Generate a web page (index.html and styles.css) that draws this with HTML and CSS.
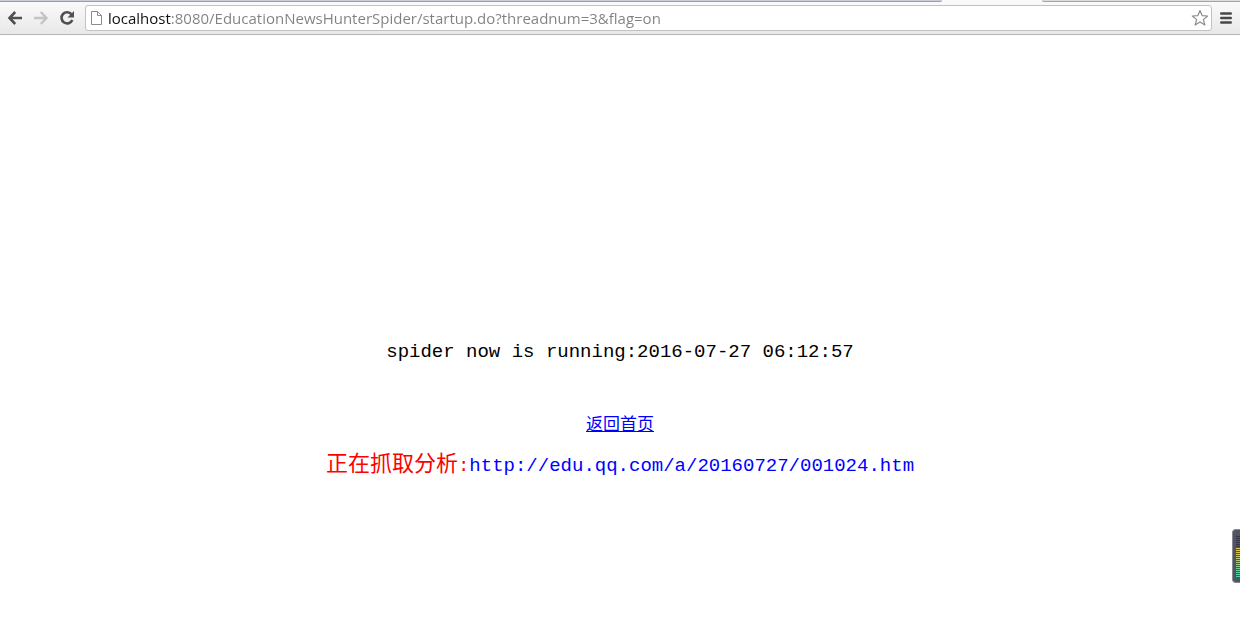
FILE: index.html
```html
<!DOCTYPE html>
<html lang="zh-CN">
<head>
<meta charset="utf-8">
<title>spider</title>
<link rel="stylesheet" href="styles.css">
</head>
<body>
<header class="browser">
  <div class="tabs"><span class="tabs-left"></span><span class="tab-active"></span><span class="tabs-right"></span></div>
  <div class="toolbar">
    <button class="tool" aria-label="Back"><svg width="16" height="16" viewBox="0 0 16 16" fill="none" stroke="#505052" stroke-width="2.6"><path d="M8.2 2 2.5 8l5.7 6M2.5 8H15"/></svg></button>
    <button class="tool" aria-label="Forward" disabled><svg width="16" height="16" viewBox="0 0 16 16" fill="none" stroke="#c4c4c4" stroke-width="2.4"><path d="m7.8 2 5.7 6-5.7 6M13.5 8H1"/></svg></button>
    <button class="tool" aria-label="Reload"><svg width="16" height="16" viewBox="0 0 16 16"><path d="M12.6 4.4A5.6 5.6 0 1 0 13.3 10" fill="none" stroke="#505052" stroke-width="2.6"/><path d="M15 1v6.5H8.5z" fill="#505052"/></svg></button>
    <div class="address">
      <svg class="page-icon" width="12" height="14" viewBox="0 0 12 14" fill="#fff" stroke="#8c8c8c"><path d="M.5.5h6l4 4v9H.5zM6.5.5v4h4"/></svg>
      <input class="url" type="text" aria-label="Address" value="localhost:8080/EducationNewsHunterSpider/startup.do?threadnum=3&amp;flag=on">
      <button class="star" aria-label="Bookmark"><svg width="18" height="18" viewBox="0 0 18 18" fill="#fff" stroke="#8c8c8c" stroke-width="1.2" stroke-linejoin="round"><path d="m9 1.5 2.1 5.1 5.6.4-4.3 3.6 1.4 5.5L9 13.1l-4.8 3 1.4-5.5L1.3 7l5.6-.4z"/></svg></button>
    </div>
    <button class="menu" aria-label="Menu"><svg width="12" height="12" viewBox="0 0 12 12" stroke="#48484a" stroke-width="2.6" stroke-linecap="round"><path d="M1.3 1.5h9.4M1.3 6h9.4M1.3 10.5h9.4"/></svg></button>
  </div>
</header>
<main class="content">
  <p class="status">spider now is running:2016-07-27 06:12:57</p>
  <a class="home" href="#">返回首页</a>
  <p class="crawl"><span class="label">正在抓取分析</span><span class="colon">:</span><span class="target">http://edu.qq.com/a/20160727/001024.htm</span></p>
</main>
<div class="meter"><div class="meter-bars"></div></div>
</body>
</html>
```
FILE: styles.css
```css
* { box-sizing: border-box; }
body {
  margin: 0;
  min-height: 100vh;
  background: #fff;
  font-family: "Liberation Mono", "Noto Sans CJK SC", monospace;
}
button { padding: 0; border: 0; background: none; display: flex; align-items: center; justify-content: center; }
.tabs { display: flex; height: 2px; background: #fafafa; }
.tabs-left { width: 76%; background: #c9ced6; border-bottom: 1px solid #9a9ea4; border-bottom-right-radius: 2px; }
.tab-active { width: 8%; }
.tabs-right { flex: 1; background: #dcdcdc; border-bottom: 1px solid #a4a4a4; border-bottom-left-radius: 2px; }
.toolbar {
  display: flex;
  align-items: center;
  height: 33px;
  padding: 0 4px 0 2px;
  background: linear-gradient(#fafafa, #e8e8e8);
  border-bottom: 1px solid #b4b4b4;
}
.tool { width: 26px; height: 24px; }
.address {
  flex: 1;
  display: flex;
  align-items: center;
  height: 26px;
  margin-left: 5px;
  padding: 0 2px 0 5px;
  background: #fff;
  border: 1px solid #c2c2c2;
  border-radius: 3px;
}
.url {
  flex: 1;
  min-width: 0;
  height: 22px;
  margin-left: 5px;
  padding: 0;
  border: 0;
  outline: 0;
  font: 15px "Open Sans", sans-serif;
  color: transparent;
  background: linear-gradient(to right, #111 63px, #808080 63px);
  -webkit-background-clip: text;
  background-clip: text;
}
.menu { width: 20px; height: 24px; margin-left: 4px; }
.content {
  display: flex;
  flex-direction: column;
  align-items: center;
  padding-top: 304px;
}
.status { margin: 0; font-size: 19px; line-height: 26px; color: #000; }
.home { margin-top: 48px; font-size: 17px; line-height: 26px; color: #00f; }
.crawl { margin: 13px 0 0; font-size: 19px; line-height: 28px; color: #00f; }
.label { font-size: 22px; }
.label, .colon { color: #f00; }
.meter {
  position: fixed;
  right: 0;
  top: 529px;
  width: 8px;
  height: 54px;
  padding: 6px 0 5px 3px;
  background: #505463;
  border: 1px solid #868994;
  border-right: 0;
  border-radius: 4px 0 0 4px;
}
.meter-bars {
  height: 100%;
  background:
    repeating-linear-gradient(transparent 0 1px, #505463 1px 2px),
    linear-gradient(#343846 30%, #e8c43c 30%, #b4c478 60%, #38d8a8);
}
```
